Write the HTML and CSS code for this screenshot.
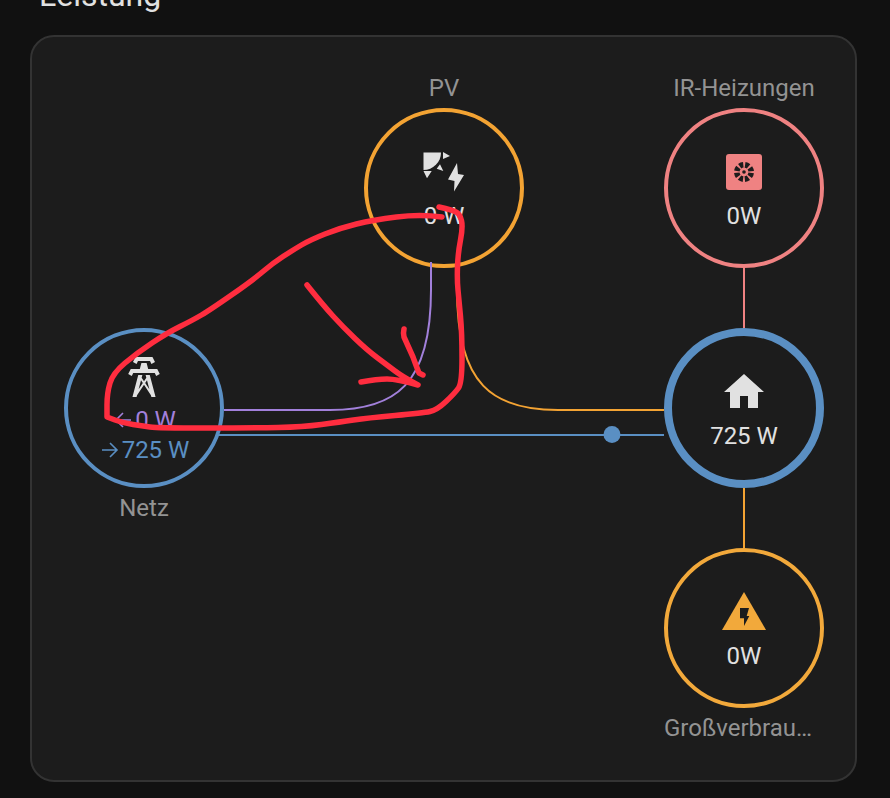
FILE: index.html
```html
<!DOCTYPE html>
<html lang="en">
<head>
  <meta charset="UTF-8" />
  <title>Leistung</title>
  <link rel="stylesheet" href="styles.css">
</head>
<body>
  <h1 class="title">Leistung</h1>
  <div class="card">
    <div class="label col-mid row-top">PV</div>
    <div class="label col-right row-top">IR-Heizungen</div>

    <div class="node solar col-mid row-a">
      <svg class="icon" viewBox="0 0 48 48">
        <path fill="#e1e1e1" d="M3.5 4.5H21A17.5 17.5 0 0 1 3.500 22Z"/>
        <path fill="#e1e1e1" d="M23 4L30 8L23 11ZM16.700 20.700L20 16.300L23.300 23ZM3.500 23H11.700L7 30.300ZM37 15L28 31.500L34.500 33L34 43.500L44 27L38 26Z"/>
      </svg>
      <div class="value">0 W</div>
    </div>

    <div class="node heater col-right row-a">
      <svg class="icon" viewBox="0 0 48 48">
        <rect x="6" y="6" width="36" height="36" rx="3" fill="#ef8282"/>
        <circle class="wheel" cx="24" cy="24" r="7.2"/>
        <circle cx="24" cy="24" r="1.8" fill="#1c1c1c"/>
      </svg>
      <div class="value">0W</div>
    </div>

    <div class="node grid col-left row-b">
      <svg class="icon" viewBox="0 0 24 24">
        <path fill="#e1e1e1" d="M8.28,5.45L6.5,4.55L7.76,2H16.23L17.5,4.55L15.72,5.44L15,4H9L8.28,5.45M18.62,8H14.09L13.3,5H10.7L9.91,8H5.38L4.1,10.55L5.89,11.44L6.62,10H17.38L18.1,11.45L19.89,10.56L18.62,8M17.77,22H15.7L15.46,21.1L12,15.9L8.53,21.1L8.3,22H6.23L9.12,11H11.19L10.83,12.35L12,14.1L13.16,12.35L12.81,11H14.88L17.77,22M11.4,15L10.5,13.65L9.32,18.13L11.4,15M14.68,18.12L13.5,13.64L12.6,15L14.68,18.12Z"/>
      </svg>
      <div class="value-list">
        <div class="value return">
          <svg class="arrow" viewBox="0 0 18 18"><path d="M17 9H2M9 2L2 9L9 16"/></svg>0 W
        </div>
        <div class="value consume">
          <svg class="arrow" viewBox="0 0 18 18"><path d="M1 9H16M9 2L16 9L9 16"/></svg>725 W
        </div>
      </div>
    </div>

    <div class="node home col-right row-b">
      <svg class="icon" viewBox="0 0 24 24">
        <path fill="#e1e1e1" d="M10,20V14H14V20H19V12H22L12,3L2,12H5V20H10Z"/>
      </svg>
      <div class="value">725 W</div>
    </div>

    <div class="label col-left row-gap">Netz</div>

    <div class="node big col-right row-c">
      <svg class="icon" viewBox="0 0 48 48">
        <path fill="#f2a93b" d="M24 4L46 42H2Z"/>
        <path fill="#1c1c1c" d="M20 20H29L26.700 28H29.300L24 38V30.300H20Z"/>
      </svg>
      <div class="value">0W</div>
    </div>

    <div class="label truncated col-right row-bottom">Großverbrau…</div>
  </div>

  <!-- flow lines and the hand drawn marks on top of the screenshot -->
  <svg class="overlay" viewBox="0 0 890 798">
    <g fill="none" stroke-width="2">
      <path stroke="#a280db" d="M431 262V290C431 385 395 410 330 410H224"/>
      <path stroke="#f3a333" d="M457 262V290C457 385 493 410 558 410H664"/>
      <path stroke="#5a8fc3" d="M218 435H664"/>
      <path stroke="#ef8282" d="M744 268V328"/>
      <path stroke="#f3a333" d="M744 488V548"/>
    </g>
    <circle cx="612" cy="434.5" r="8.5" fill="#5a8fc3"/>
    <g fill="none" stroke="#ff2d3f" stroke-width="5.500" stroke-linecap="round" stroke-linejoin="round">
      <path d="M439 207L445.500 208.500Q452 210 456 212Q460 214 461.500 220.500Q463 227 460.500 240Q458 253 457.500 266.500Q457 280 458 290Q459 300 460.500 316.500Q462 333 462 358Q462 383 458.500 388Q455 393 446 401.500Q437 410 430 411.500Q423 413 395 415.500Q367 418 353.500 420Q340 422 321.500 424.500Q303 427 278 427.500Q253 428 205 428Q157 428 150 427Q143 426 133 424.500Q123 423 115 420L107 417L107 405Q107 393 110 383Q113 373 125 363Q137 353 152 343Q167 333 180 326.500Q193 320 201.500 315Q210 310 231.500 295Q253 280 263 271.500Q273 263 283 256.500Q293 250 301.500 245Q310 240 325 234Q340 228 356.500 224Q373 220 396.500 217Q420 214 442 217"/>
      <path d="M307 285Q323 305 333 316Q343 327 355 338.500Q367 350 377 357.500Q387 365 395 371Q403 377 418 385Q397 379 387 379Q377 379 361 382"/>
      <path d="M404 329Q403 333 404 337L413 357Q417 368 419 373L423 375"/>
    </g>
  </svg>
</body>
</html>
```
FILE: styles.css
```css
html, body {
  margin: 0;
  height: 798px;
  overflow: hidden;
}
body {
  position: relative;
  background: #111111;
  font-family: Roboto, "Liberation Sans", sans-serif;
  color: #e1e1e1;
}
.title {
  margin: -24px 0 0 39px;
  height: 59px;
  font-size: 32px;
  line-height: 38px;
  font-weight: 400;
  color: #e1e1e1;
}
.card {
  box-sizing: border-box;
  width: 827px;
  height: 747px;
  margin-left: 30px;
  padding: 31px 31px 0 32px;
  background: #1c1c1c;
  border: 2px solid #333333;
  border-radius: 24px;
  display: grid;
  grid-template-columns: 160px 1fr 160px 1fr 160px;
  grid-template-rows: 40px 160px 60px 160px 40px 20px 160px 40px;
}
.col-left { grid-column: 1; }
.col-mid { grid-column: 3; }
.col-right { grid-column: 5; }
.row-top { grid-row: 1; }
.row-a { grid-row: 2; }
.row-b { grid-row: 4; }
.row-gap { grid-row: 5; }
.row-c { grid-row: 7; }
.row-bottom { grid-row: 8; }

.label {
  font-size: 24px;
  line-height: 40px;
  color: #939393;
  text-align: center;
  white-space: nowrap;
}
.truncated {
  text-align: left;
}
.node {
  box-sizing: border-box;
  width: 160px;
  height: 160px;
  border-radius: 50%;
  border: 4px solid;
  display: flex;
  flex-direction: column;
  align-items: center;
  justify-content: center;
}
.solar { border-color: #f3a333; }
.heater { border-color: #ef8282; }
.grid { border-color: #5a8fc3; }
.home { border-color: #5a8fc3; border-width: 8px; }
.big { border-color: #f2a93b; }
.icon {
  width: 48px;
  height: 48px;
  flex: none;
}
.wheel {
  fill: none;
  stroke: #1c1c1c;
  stroke-width: 5.6;
  stroke-dasharray: 3.8 1.85;
  stroke-dashoffset: -0.925;
}
.value {
  margin: 6px 0 -1px;
  font-size: 24px;
  line-height: 28px;
  white-space: nowrap;
  display: flex;
  align-items: center;
}
.value-list {
  margin: 4px 0 -1px 2px;
}
.value-list .value {
  margin: 0;
  line-height: 30px;
  justify-content: center;
}
.return { color: #a280db; }
.consume { color: #5a8fc3; }
.arrow {
  width: 18px;
  height: 18px;
  margin-right: 3px;
  fill: none;
  stroke: currentColor;
  stroke-width: 1.6;
}
.overlay {
  position: absolute;
  left: 0;
  top: 0;
  width: 890px;
  height: 798px;
  pointer-events: none;
}
```
